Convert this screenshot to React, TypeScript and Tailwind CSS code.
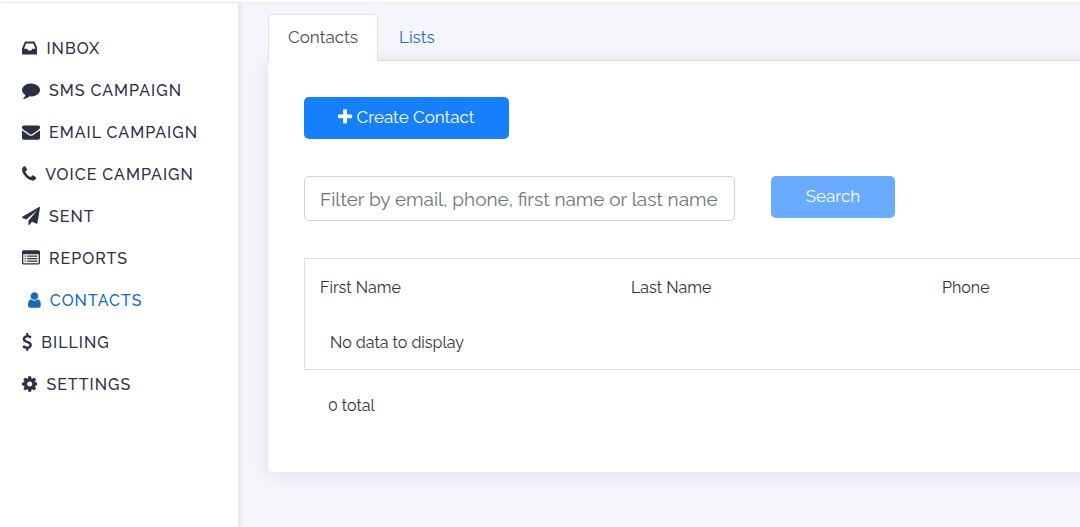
import { useState } from "react";

type Glyph = { x: number; width: number; path: string };

const glyphs: Record<string, Glyph> = {
  inbox: {
    x: 128,
    width: 1536,
    path: "M1151 960h316q-1-3-2.5-8t-2.5-8l-212-496h-708l-212 496q-1 2-2.5 8t-2.5 8h316l95 192h320zm513 30v482q0 26-19 45t-45 19h-1408q-26 0-45-19t-19-45v-482q0-62 25-123l238-552q10-25 36.5-42t52.5-17h832q26 0 52.5 17t36.5 42l238 552q25 61 25 123z",
  },
  comment: {
    x: 0,
    width: 1792,
    path: "M1792 896q0 174-120 321.5t-326 233-450 85.5q-70 0-145-8-198 175-460 242-49 14-114 22-17 2-30.5-9t-17.5-29v-1q-3-4-.5-12t2-10 4.5-9.5l6-9 7-8.5 8-9q7-8 31-34.5t34.5-38 31-39.5 32.5-51 27-59 26-76q-157-89-247.5-220t-90.5-281q0-130 71-248.5t191-204.5 286-136.5 348-50.5q244 0 450 85.5t326 233 120 321.5z",
  },
  envelope: {
    x: 0,
    width: 1792,
    path: "M1792 710v794q0 66-47 113t-113 47h-1472q-66 0-113-47t-47-113v-794q44 49 101 87 362 246 497 345 57 42 92.5 65.5t94.5 48 110 24.5h2q51 0 110-24.5t94.5-48 92.5-65.5q170-123 498-345 57-39 100-87zm0-294q0 79-49 151t-122 123q-376 261-468 325-10 7-42.5 31t-54 38.5-52 32.5-57.5 27-50 9h-2q-23 0-50-9t-57.5-27-52-32.5-54-38.5-42.5-31q-91-64-262-182.5t-205-142.5q-62-42-117-115.5t-55-136.5q0-78 41.5-130t118.5-52h1472q65 0 112.5 47t47.5 113z",
  },
  phone: {
    x: 192,
    width: 1408,
    path: "M1600 1240q0 27-10 70.5t-21 68.5q-21 50-122 106-94 51-186 51-27 0-53-3.5t-57.5-12.5-47-14.5-55.5-20.5-49-18q-98-35-175-83-127-79-264-216t-216-264q-48-77-83-175-3-9-18-49t-20.5-55.5-14.5-47-12.5-57.5-3.5-53q0-92 51-186 56-101 106-122 25-11 68.5-21t70.5-10q14 0 21 3 18 6 53 76 11 19 30 54t35 63.5 31 53.5q3 4 17.5 25t21.5 35.5 7 28.5q0 20-28.5 50t-62 55-62 53-28.5 46q0 9 5 22.5t8.5 20.5 14 24 11.5 19q76 137 174 235t235 174q2 1 19 11.5t24 14 20.5 8.5 22.5 5q18 0 46-28.5t53-62 55-62 50-28.5q14 0 28.5 7t35.5 21.5 25 17.5q25 15 53.5 31t63.5 35 54 30q70 35 76 53 3 7 3 21z",
  },
  plane: {
    x: 0,
    width: 1792,
    path: "M1764 11q33 24 27 64l-256 1536q-5 29-32 45-14 8-31 8-11 0-24-5l-453-185-242 295q-18 23-49 23-13 0-22-4-19-7-30.5-23.5t-11.5-36.5v-349l864-1059-1069 925-395-162q-37-14-40-55-2-40 32-59l1664-960q15-9 32-9 20 0 36 11z",
  },
  list: {
    x: 0,
    width: 1792,
    path: "M160 128h1472q66 0 113 47t47 113v1088q0 66-47 113t-113 47h-1472q-66 0-113-47t-47-113v-1088q0-66 47-113t113-47zM128 544v832q0 32 32 32h1472q32 0 32-32v-832q0-32-32-32h-1472q-32 0-32 32zM256 640h128v128h-128zM256 896h128v128h-128zM256 1152h128v128h-128zM512 640h1024v128h-1024zM512 896h1024v128h-1024zM512 1152h1024v128h-1024z",
  },
  user: {
    x: 256,
    width: 1280,
    path: "M1536 1399q0 109-62.5 187t-150.5 78h-854q-88 0-150.5-78t-62.5-187q0-85 8.5-160.5t31.5-152 58.5-131 94-89 134.5-34.5q131 128 313 128t313-128q76 0 134.5 34.5t94 89 58.5 131 31.5 152 8.5 160.5zm-256-887q0 159-112.5 271.5t-271.5 112.5-271.5-112.5-112.5-271.5 112.5-271.5 271.5-112.5 271.5 112.5 112.5 271.5z",
  },
  dollar: {
    x: 384,
    width: 1024,
    path: "M1362 1185q0 153-99.5 263.5t-258.5 136.5v175q0 14-9 23t-23 9h-135q-13 0-22.5-9.5t-9.5-22.5v-175q-66-9-127.5-31t-101.5-44.5-74-48-46.5-37.5-17.5-18q-17-21-2-41l103-135q7-10 23-12 15-2 24 9l2 2q113 99 243 125 37 8 74 8 81 0 142.5-43t61.5-122q0-28-15-53t-33.5-42-58.5-37.5-66-32-80-32.5q-39-16-61.5-25t-61.5-26.5-62.5-31-56.5-35.5-53.5-42.5-43.5-49-35.5-58-21-66.5-8.5-78q0-138 98-242t255-134v-180q0-13 9.5-22.5t22.5-9.5h135q14 0 23 9t9 23v176q57 6 110.5 23t87 33.5 63.5 37.5 39 29 15 14q17 18 5 38l-81 146q-8 15-23 16-14 3-27-7-3-3-14.5-12t-39-26.5-58.5-32-74.5-26-85.5-11.5q-95 0-155 43t-60 111q0 26 8.5 48t29.5 41.5 39.5 33 56 31 60.5 27 70 27.5q53 20 81 31.5t76 35 75.5 42.5 62 50 53 63.5 31.5 76.5 13 94z",
  },
  cog: {
    x: 128,
    width: 1536,
    path: "M1152 896q0-106-75-181t-181-75-181 75-75 181 75 181 181 75 181-75 75-181zm512-109v222q0 12-8 23t-20 13l-185 28q-19 54-39 91 35 50 107 138 10 12 10 25t-9 23q-27 37-99 108t-94 71q-12 0-26-9l-138-108q-44 23-91 38-16 136-29 186-7 28-36 28h-222q-14 0-24.5-8.5t-11.5-21.5l-28-184q-49-16-90-37l-141 107q-10 9-25 9-14 0-25-11-126-114-165-168-7-10-7-23 0-12 8-23 15-21 51-66.5t54-70.5q-27-50-41-99l-183-27q-13-2-21-12.5t-8-23.5v-222q0-12 8-23t19-13l186-28q14-46 39-92-40-57-107-138-10-12-10-24 0-10 9-23 26-36 98.5-107.5t94.5-71.5q13 0 26 10l138 107q44-23 91-38 16-136 29-186 7-28 36-28h222q14 0 24.5 8.5t11.5 21.5l28 184q49 16 90 37l142-107q9-9 24-9 13 0 25 10 129 119 165 170 7 8 7 22 0 12-8 23-15 21-51 66.5t-54 70.5q26 50 41 98l183 28q13 2 21 12.5t8 23.5z",
  },
  plus: {
    x: 192,
    width: 1408,
    path: "M1600 736v192q0 40-28 68t-68 28h-416v416q0 40-28 68t-68 28h-192q-40 0-68-28t-28-68v-416h-416q-40 0-68-28t-28-68v-192q0-40 28-68t68-28h416v-416q0-40 28-68t68-28h192q40 0 68 28t28 68v416h416q40 0 68 28t28 68z",
  },
};

function Icon({ name }: { name: string }) {
  const { x, width, path } = glyphs[name];
  return (
    <svg
      viewBox={`${x} 0 ${width} 1792`}
      className="mb-[2px] h-[18px] w-auto shrink-0"
      fill="currentColor"
      fillRule="evenodd"
      aria-hidden="true"
    >
      <path d={path} />
    </svg>
  );
}

const links = [
  { icon: "inbox", label: "INBOX" },
  { icon: "comment", label: "SMS CAMPAIGN" },
  { icon: "envelope", label: "EMAIL CAMPAIGN" },
  { icon: "phone", label: "VOICE CAMPAIGN" },
  { icon: "plane", label: "SENT" },
  { icon: "list", label: "REPORTS" },
  { icon: "user", label: "CONTACTS", active: true },
  { icon: "dollar", label: "BILLING" },
  { icon: "cog", label: "SETTINGS" },
];

function Sidebar() {
  return (
    <nav className="z-10 w-[238px] shrink-0 bg-white pt-[25px] shadow-[3px_0_4px_rgba(60,55,30,0.08)]">
      <ul>
        {links.map(({ icon, label, active }) => (
          <li key={label}>
            <a
              href="#"
              aria-current={active ? "page" : undefined}
              className={`flex h-[42px] items-center gap-[9px] text-base font-medium tracking-[1px] ${
                active ? "pl-7 text-[#1a6bb5]" : "pl-[22px] text-[#2b3045]"
              }`}
            >
              <Icon name={icon} />
              {label}
            </a>
          </li>
        ))}
      </ul>
    </nav>
  );
}

export default function App() {
  const [query, setQuery] = useState("");
  return (
    <div className="flex min-h-screen flex-col bg-[#f4f6fb] font-[Raleway,Lato,sans-serif] text-[#333333]">
      <header className="h-[3px] border-b border-[#eeeef1] bg-white" />
      <div className="flex flex-1">
        <Sidebar />
        <main className="min-w-0 flex-1 overflow-hidden pt-[11px] pb-[50px] pl-[30px]">
          <div role="tablist" className="flex h-[47px] border-b border-[#dee2e6] text-[17px]">
            <button
              role="tab"
              aria-selected="true"
              className="-mb-px w-[110px] rounded-t-[5px] border border-b-0 border-[#dee2e6] bg-white text-[#495057]"
            >
              Contacts
            </button>
            <button role="tab" aria-selected="false" className="border-t border-transparent px-[21px] text-[#1f70b5]">
              Lists
            </button>
          </div>
          <section className="-mr-5 rounded-[5px] bg-white pt-9 pb-[54px] pl-9 shadow-[0_2px_18px_rgba(40,45,80,0.11)]">
            <button className="flex h-[42px] w-[205px] items-center justify-center gap-1 rounded-[5px] bg-[#167ffc] text-[17px] text-white">
              <Icon name="plus" />
              Create Contact
            </button>
            <form className="mt-[37px] flex items-start gap-9" onSubmit={(e) => e.preventDefault()}>
              <input
                type="text"
                aria-label="Filter contacts"
                value={query}
                onChange={(e) => setQuery(e.target.value)}
                placeholder="Filter by email, phone, first name or last name"
                className="h-[45px] w-[431px] rounded-[5px] border border-[#ced4da] bg-white px-[15px] text-[19px] placeholder:text-[#6c757d]"
              />
              <button
                disabled={!query}
                className="h-[42px] w-[124px] rounded-[5px] bg-[#167ffc] text-[17px] text-white disabled:bg-[#69abfe]"
              >
                Search
              </button>
            </form>
            <div className="mt-[37px] border border-r-0 border-[#dcdddf]">
              <table className="w-full table-fixed text-left text-base">
                <thead>
                  <tr className="h-[57px]">
                    <th className="w-[311px] pl-[15px] font-normal">First Name</th>
                    <th className="w-[311px] pl-[15px] font-normal">Last Name</th>
                    <th className="pl-[15px] font-normal">Phone</th>
                  </tr>
                </thead>
                <tbody>
                  <tr>
                    <td colSpan={3} className="h-[53px] pl-[25px]">
                      No data to display
                    </td>
                  </tr>
                </tbody>
              </table>
            </div>
            <p className="mt-6 pl-6 text-base">0 total</p>
          </section>
        </main>
      </div>
    </div>
  );
}
